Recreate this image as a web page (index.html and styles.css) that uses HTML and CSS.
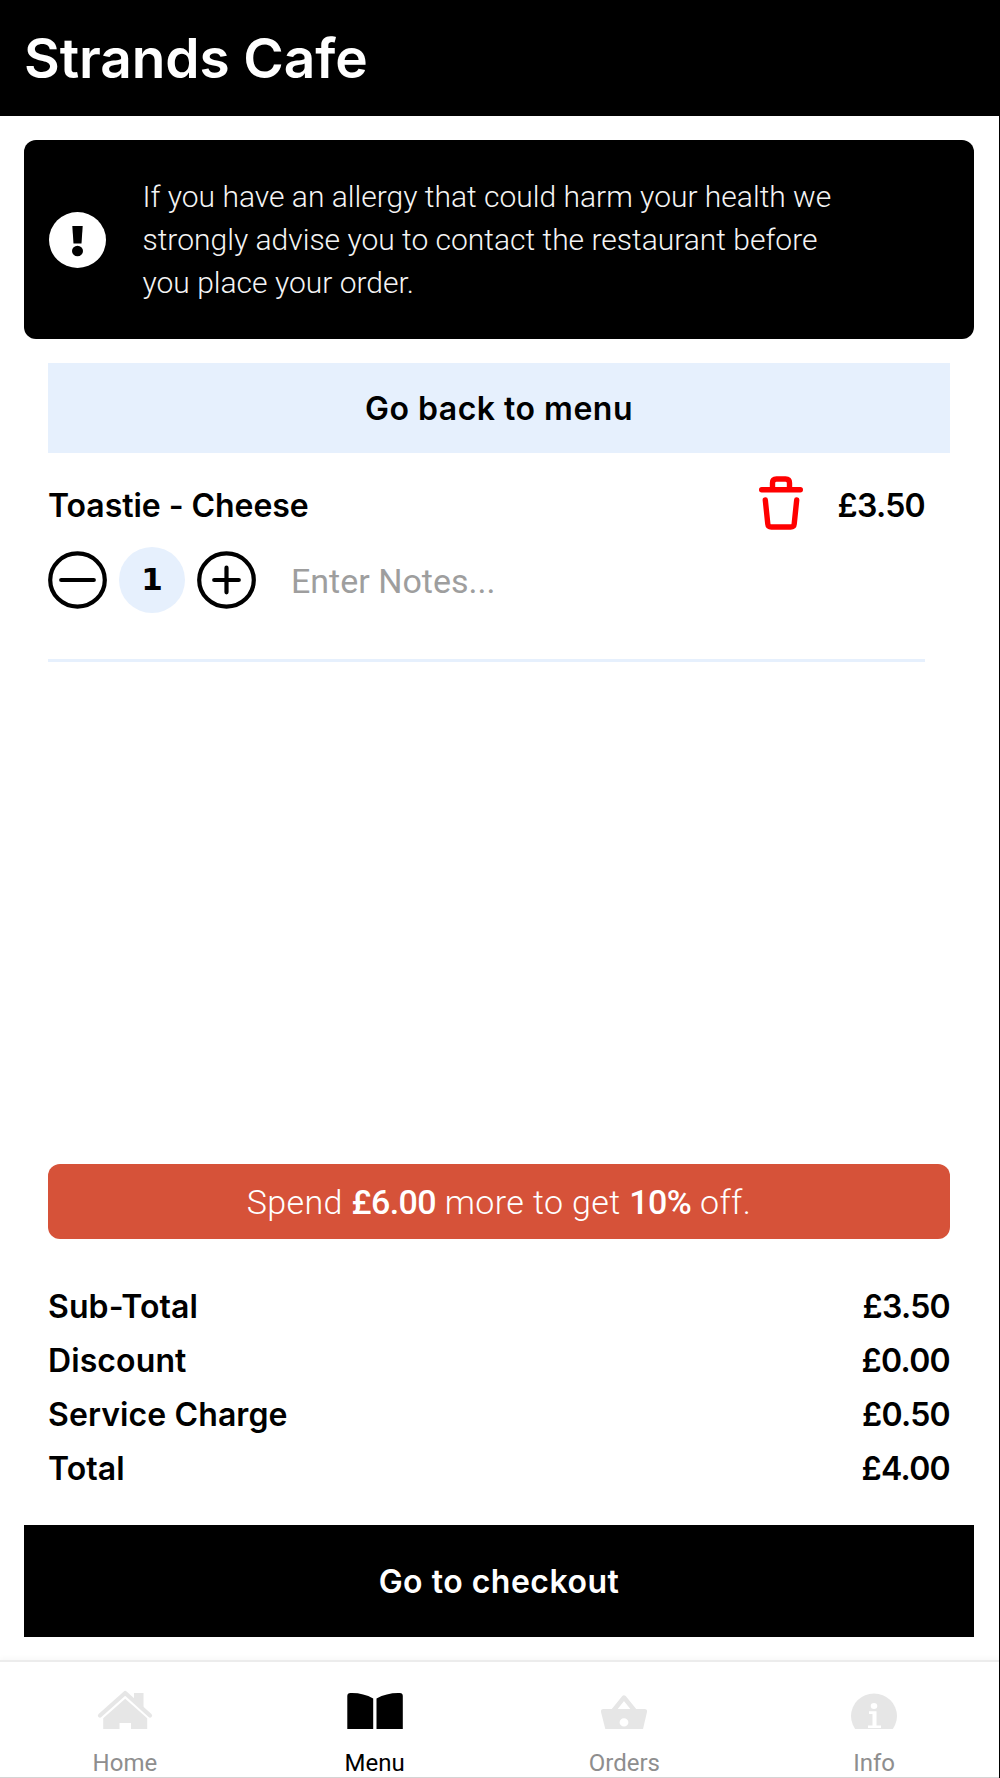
FILE: index.html
```html
<!DOCTYPE html>
<html lang="en">
<head>
<meta charset="utf-8">
<title>Strands Cafe</title>
<link rel="stylesheet" href="styles.css">
</head>
<body>
<div class="app">
  <header class="header"><h1 class="title">Strands Cafe</h1></header>

  <section class="alert">
    <svg class="alert-icon" viewBox="0 0 57 56">
      <ellipse cx="28.5" cy="28" rx="28.5" ry="28" fill="#fff"/>
      <path d="M23.3 14h10.4l-1.2 17.5h-8z" fill="#000"/>
      <ellipse cx="28.5" cy="39" rx="5.5" ry="5.2" fill="#000"/>
    </svg>
    <p class="alert-text">If you have an allergy that could harm your health we<br>strongly advise you to contact the restaurant before<br>you place your order.</p>
  </section>

  <button class="back">Go back to menu</button>

  <main class="basket">
    <article class="item">
      <div class="item-head">
        <span class="item-name">Toastie - Cheese</span>
        <svg class="trash" viewBox="0 0 44 54" fill="none" stroke="#f00" stroke-width="5.4" stroke-linecap="round" stroke-linejoin="round">
          <path d="M2.700 13.800h38.600M13.500 13V7q0-4 4-4h9q4 0 4 4v6M6.300 24l2.500 24q.3 3 3.500 3h19.400q3.200 0 3.500-3L37.700 24"/>
        </svg>
        <span class="item-price">£3.50</span>
      </div>
      <div class="item-controls">
        <svg class="step" viewBox="0 0 59 58" fill="none" stroke="#000" stroke-width="4.2" stroke-linecap="round">
          <ellipse cx="29.500" cy="29" rx="27.300" ry="26.600"/><path d="M13.200 29h32.600"/>
        </svg>
        <span class="qty">1</span>
        <svg class="step" viewBox="0 0 59 58" fill="none" stroke="#000" stroke-width="4.2" stroke-linecap="round">
          <ellipse cx="29.500" cy="29" rx="27.300" ry="26.600"/><path d="M17.200 29h24.600M29.500 16.700v24.600"/>
        </svg>
        <span class="notes">Enter Notes...</span>
      </div>
    </article>
  </main>

  <div class="promo">Spend <b>£6.00</b> more to get <b>10%</b> off.</div>

  <dl class="totals">
    <div class="row"><dt>Sub-Total</dt><dd>£3.50</dd></div>
    <div class="row"><dt>Discount</dt><dd>£0.00</dd></div>
    <div class="row"><dt>Service Charge</dt><dd>£0.50</dd></div>
    <div class="row"><dt>Total</dt><dd>£4.00</dd></div>
  </dl>

  <button class="checkout">Go to checkout</button>

  <nav class="nav">
    <a class="tab">
      <svg class="tab-icon" viewBox="0 0 60 39">
        <path d="M5 25.500 30.200 3 55 25.500" fill="none" stroke="#e6e6e6" stroke-width="4.200" stroke-linecap="round" stroke-linejoin="round"/>
        <path d="M39 3h9.500v15L39 9.500zM30.200 8.700 52.200 28.300V39H36v-6H24.500v6H8.200V28.300z" fill="#e6e6e6"/>
      </svg>
      <span>Home</span>
    </a>
    <a class="tab tab-active">
      <svg class="tab-icon" viewBox="0 0 60 39">
        <path d="M2.300 39V6Q2.300 3 5.500 3 18 2.600 28.200 8.500V39zM31.500 39V8.500Q42 2.600 54.800 3 57.800 3 57.800 6V39z" fill="#000"/>
      </svg>
      <span>Menu</span>
    </a>
    <a class="tab">
      <svg class="tab-icon" viewBox="0 0 60 39">
        <path d="M19.500 20.500 30 7.500 40.500 20.500" fill="none" stroke="#e6e6e6" stroke-width="4.400" stroke-linejoin="round"/>
        <path fill-rule="evenodd" d="M9.500 19h41q3 0 2.500 3L49 39H11.300L7 22q-.5-3 2.500-3zM30 28.200a4.400 4.200 0 1 0 0 8.400 4.400 4.200 0 1 0 0-8.400z" fill="#e6e6e6"/>
      </svg>
      <span>Orders</span>
    </a>
    <a class="tab">
      <svg class="tab-icon" viewBox="0 0 60 39">
        <ellipse cx="30" cy="26" rx="23" ry="22.500" fill="#e6e6e6"/>
        <ellipse cx="30" cy="16" rx="3.300" ry="2.900" fill="#fff"/>
        <path d="M25 21.200h7.500v14.300H37v2.500H24v-2.500h4.500V24H25z" fill="#fff"/>
      </svg>
      <span>Info</span>
    </a>
  </nav>
</div>
</body>
</html>
```
FILE: styles.css
```css
* { box-sizing: border-box; margin: 0; padding: 0; }

body { background: #fff; color: #000; font-family: Inter, sans-serif; }

.app {
  display: flex;
  flex-direction: column;
  height: 1778px;
  width: 1000px;
  border-right: 1.5px solid #000;
  overflow: hidden;
}

.header {
  display: flex;
  align-items: center;
  height: 116px;
  padding-left: 24px;
  background: #000;
  color: #fff;
  flex: none;
}
.title { font-size: 55px; font-weight: 600; line-height: 60px; letter-spacing: -.1px; }

.alert {
  display: flex;
  align-items: center;
  flex: none;
  gap: 36.500px;
  height: 199px;
  margin: 24px 25px 0 24px;
  padding-left: 25px;
  border-radius: 12px;
  background: #000;
}
.alert-icon { width: 57px; height: 56px; }
.alert-text {
  padding-top: 2px;
  color: #f4f4f4;
  font: 300 30px/42.700px Roboto, sans-serif;
  white-space: nowrap;
}

button { border: 0; font-family: inherit; font-size: 32px; font-weight: 600; flex: none; }

.back {
  height: 90px;
  margin: 24px 49px 0 48px;
  padding-top: 1px;
  background: #e6f0fd;
  color: #000;
  letter-spacing: .5px;
}

.basket { flex: 1; padding: 23px 74px 0 48px; }
.item { border-bottom: 3px solid #e6f0fd; height: 186px; }
.item-head {
  display: flex;
  align-items: center;
  height: 54px;
  font-size: 32px;
  font-weight: 600;
}
.item-name { flex: 1; padding-top: 5px; letter-spacing: -.05px; }
.trash { width: 44px; height: 54px; margin-right: 35px; }
.item-price { padding-top: 5px; letter-spacing: -.7px; }

.item-controls { display: flex; align-items: center; height: 66px; margin-top: 17px; }
.step { width: 59px; height: 58px; }
.qty {
  display: flex;
  align-items: center;
  justify-content: center;
  width: 66px;
  height: 66px;
  margin: 0 12px;
  padding-bottom: 2px;
  border-radius: 50%;
  background: #e6f0fd;
  font: 700 31px "DejaVu Sans", sans-serif;
}
.notes {
  margin-left: 35px;
  padding-top: 2px;
  color: #9e9e9e;
  font: 400 34px Roboto, sans-serif;
}

.promo {
  flex: none;
  height: 75px;
  margin: 0 49px 0 48px;
  border-radius: 12px;
  background: #d65239;
  color: #fff;
  font: 300 34px/76px Roboto, sans-serif;
  letter-spacing: .4px;
  text-align: center;
}
.promo b { font-weight: 500; letter-spacing: -.6px; }

.totals { flex: none; margin: 41px 49px 0 48px; font-size: 32px; font-weight: 600; }
.row { display: flex; justify-content: space-between; line-height: 54px; }
.row dt { letter-spacing: .1px; }
.row dd { letter-spacing: -.7px; }

.checkout {
  height: 112px;
  margin: 29px 25px 0 24px;
  padding-top: 1px;
  background: #000;
  color: #fff;
  letter-spacing: .5px;
}

.nav {
  display: grid;
  grid-template-columns: repeat(4, 1fr);
  flex: none;
  height: 118px;
  margin-top: 23px;
  border-top: 2px solid #ececec;
  border-bottom: 1px solid #d4d4d4;
  box-shadow: 0 -2px 5px rgba(0, 0, 0, .03);
}
.tab {
  display: flex;
  flex-direction: column;
  align-items: center;
  gap: 20px;
  padding-top: 28px;
  color: #8e8e8e;
  font: 400 24px/28px Roboto, sans-serif;
}
.tab-icon { width: 60px; height: 39px; flex: none; }
.tab-active { color: #000; }
```
